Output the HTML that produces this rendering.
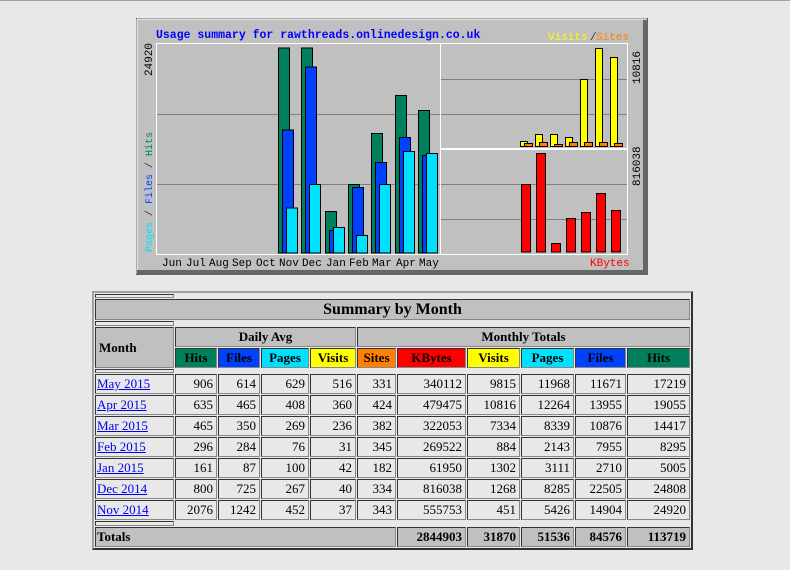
<!DOCTYPE html>
<html><head><meta charset="utf-8">
<style>
body{margin:0;width:790px;height:570px;background:#e8e8e8;position:relative;overflow:hidden;font-family:"Liberation Serif",serif;}
.top{position:absolute;left:0;top:0;width:790px;height:1px;background:#a0a0a0}
#chart{position:absolute;left:0;top:0}
table.s{position:absolute;left:92px;top:291px;width:599px;border:2px solid;border-color:#a0a0a0 #333 #333 #a0a0a0;border-spacing:1px;padding:0;table-layout:fixed;background:#e8e8e8}
table.s td,table.s th{border:1px solid;border-color:#333 #888 #888 #333;padding:0 3px;font-size:13px;height:18px;line-height:16px;white-space:nowrap}
table.s td{text-align:right}
table.s td.m{text-align:left;padding-left:1px}
table.s td.m a{color:#0000ee;text-decoration:underline}
table.s th{background:#c0c0c0;font-weight:bold}
tr.sep td{height:2px!important;padding:0!important;line-height:0;font-size:0}
tr.sep.b td{height:3px!important}
tr.sep td.e{border:none}
th.t{font-size:16px!important;height:19px!important}
.c1{background:#00805c!important}.c2{background:#0040ff!important}.c3{background:#00e0ff!important}.c4{background:#ffff00!important}.c5{background:#ff8000!important}.c6{background:#ff0000!important}
tr.tot td{background:#c0c0c0;font-weight:bold}
</style></head><body>
<div class="top"></div>
<svg id="chart" width="790" height="290" xmlns="http://www.w3.org/2000/svg">
<rect x="136.5" y="18.5" width="511" height="256" fill="#c0c0c0" stroke="#555"/>
<line x1="137" y1="19" x2="647" y2="19" stroke="#fff"/><line x1="137" y1="19" x2="137" y2="274" stroke="#fff"/>
<rect x="643" y="20" width="5" height="254" fill="#666"/><rect x="137" y="270" width="511" height="5" fill="#666"/>
<rect x="156.5" y="43.5" width="284" height="211" fill="none" stroke="#fff"/>
<rect x="440.5" y="43.5" width="187" height="105" fill="none" stroke="#fff"/>
<rect x="440.5" y="149.5" width="187" height="105" fill="none" stroke="#fff"/>
<g stroke="#808080"><line x1="157" y1="114.5" x2="440" y2="114.5"/><line x1="157" y1="184.5" x2="440" y2="184.5"/>
<line x1="441" y1="79.5" x2="627" y2="79.5"/><line x1="441" y1="114.5" x2="627" y2="114.5"/>
<line x1="441" y1="184.5" x2="627" y2="184.5"/><line x1="441" y1="219.5" x2="627" y2="219.5"/></g>
<g stroke="#000" stroke-width="1">
<rect x="278.5" y="48" width="11" height="205" fill="#00805c"/><rect x="282.5" y="130" width="11" height="123" fill="#0040ff"/><rect x="286.5" y="208" width="11" height="45" fill="#00e0ff"/>
<rect x="301.5" y="48" width="11" height="205" fill="#00805c"/><rect x="305.5" y="67" width="11" height="186" fill="#0040ff"/><rect x="309.5" y="184.5" width="11" height="68.5" fill="#00e0ff"/>
<rect x="325.5" y="211.5" width="11" height="41.5" fill="#00805c"/><rect x="329.5" y="230.5" width="11" height="22.5" fill="#0040ff"/><rect x="333.5" y="227.5" width="11" height="25.5" fill="#00e0ff"/>
<rect x="348.5" y="184.5" width="11" height="68.5" fill="#00805c"/><rect x="352.5" y="187.5" width="11" height="65.5" fill="#0040ff"/><rect x="356.5" y="235.5" width="11" height="17.5" fill="#00e0ff"/>
<rect x="371.5" y="133.5" width="11" height="119.5" fill="#00805c"/><rect x="375.5" y="162.5" width="11" height="90.5" fill="#0040ff"/><rect x="379.5" y="184.5" width="11" height="68.5" fill="#00e0ff"/>
<rect x="395.5" y="95.5" width="11" height="157.5" fill="#00805c"/><rect x="399.5" y="137.5" width="11" height="115.5" fill="#0040ff"/><rect x="403.5" y="151.5" width="11" height="101.5" fill="#00e0ff"/>
<rect x="418.5" y="110.5" width="11" height="142.5" fill="#00805c"/><rect x="422.5" y="155.5" width="11" height="97.5" fill="#0040ff"/><rect x="426.5" y="153.5" width="11" height="99.5" fill="#00e0ff"/>
<rect x="520.5" y="141.5" width="7" height="5" fill="#ff0"/><rect x="524.5" y="143.5" width="8" height="3" fill="#ff8000"/>
<rect x="535.5" y="134.5" width="7" height="12" fill="#ff0"/><rect x="539.5" y="142.5" width="8" height="4" fill="#ff8000"/>
<rect x="550.5" y="134.5" width="7" height="12" fill="#ff0"/><rect x="554.5" y="144.5" width="8" height="2" fill="#ff8000"/>
<rect x="565.5" y="137.5" width="7" height="9" fill="#ff0"/><rect x="569.5" y="142.5" width="8" height="4" fill="#ff8000"/>
<rect x="580.5" y="79.5" width="7" height="67" fill="#ff0"/><rect x="584.5" y="142.5" width="8" height="4" fill="#ff8000"/>
<rect x="595.5" y="48.5" width="7" height="98" fill="#ff0"/><rect x="599.5" y="142.5" width="8" height="4" fill="#ff8000"/>
<rect x="610.5" y="57.5" width="7" height="89" fill="#ff0"/><rect x="614.5" y="143.5" width="8" height="3" fill="#ff8000"/>
<rect x="521.5" y="184.5" width="9" height="67.5" fill="#f00"/>
<rect x="536.5" y="153.5" width="9" height="98.5" fill="#f00"/>
<rect x="551.5" y="243.5" width="9" height="8.5" fill="#f00"/>
<rect x="566.5" y="218.5" width="9" height="33.5" fill="#f00"/>
<rect x="581.5" y="212.5" width="9" height="39.5" fill="#f00"/>
<rect x="596.5" y="193.5" width="9" height="58.5" fill="#f00"/>
<rect x="611.5" y="210.5" width="9" height="41.5" fill="#f00"/>
</g>
<g font-family="Liberation Mono,monospace" font-size="11">
<text x="156" y="38" fill="#0000ff" font-weight="bold" font-size="11.5">Usage summary for rawthreads.onlinedesign.co.uk</text>
<text x="548" y="40" fill="#ffff00">Visits</text><text x="590" y="40" fill="#333">/</text><text x="596" y="40" fill="#ff8000">Sites</text>
<text x="590" y="266" fill="#ff0000">KBytes</text>
<text y="266" fill="#000" font-size="11"><tspan x="162">Jun</tspan><tspan x="186">Jul</tspan><tspan x="209">Aug</tspan><tspan x="232">Sep</tspan><tspan x="256">Oct</tspan><tspan x="279">Nov</tspan><tspan x="302">Dec</tspan><tspan x="326">Jan</tspan><tspan x="349">Feb</tspan><tspan x="372">Mar</tspan><tspan x="396">Apr</tspan><tspan x="419">May</tspan></text>
<text transform="translate(152,76) rotate(-90)" fill="#000">24920</text>
<text transform="translate(152,252) rotate(-90)" font-size="10"><tspan fill="#00e0ff">Pages</tspan><tspan fill="#333"> / </tspan><tspan fill="#0040ff">Files</tspan><tspan fill="#333"> / </tspan><tspan fill="#00805c">Hits</tspan></text>
<text transform="translate(640,84) rotate(-90)" fill="#000">10816</text>
<text transform="translate(640,186) rotate(-90)" fill="#000">816038</text>
</g>
</svg>
<table class="s">
<colgroup><col style="width:79px"><col style="width:42px"><col style="width:42px"><col style="width:48px"><col style="width:46px"><col style="width:39px"><col style="width:69px"><col style="width:53px"><col style="width:53px"><col style="width:51px"><col style="width:63px"></colgroup>
<tr class="sep"><td></td><td class="e" colspan="10"></td></tr>
<tr><th class="t" colspan="11">Summary by Month</th></tr>
<tr class="sep b"><td></td><td class="e" colspan="10"></td></tr>
<tr><th rowspan="2" style="text-align:left">Month</th><th colspan="4">Daily Avg</th><th colspan="6">Monthly Totals</th></tr>
<tr><th class="c1">Hits</th><th class="c2">Files</th><th class="c3">Pages</th><th class="c4">Visits</th><th class="c5">Sites</th><th class="c6">KBytes</th><th class="c4">Visits</th><th class="c3">Pages</th><th class="c2">Files</th><th class="c1">Hits</th></tr>
<tr class="sep"><td></td><td class="e" colspan="10"></td></tr>
<tr><td class="m"><a>May 2015</a></td><td>906</td><td>614</td><td>629</td><td>516</td><td>331</td><td>340112</td><td>9815</td><td>11968</td><td>11671</td><td>17219</td></tr>
<tr><td class="m"><a>Apr 2015</a></td><td>635</td><td>465</td><td>408</td><td>360</td><td>424</td><td>479475</td><td>10816</td><td>12264</td><td>13955</td><td>19055</td></tr>
<tr><td class="m"><a>Mar 2015</a></td><td>465</td><td>350</td><td>269</td><td>236</td><td>382</td><td>322053</td><td>7334</td><td>8339</td><td>10876</td><td>14417</td></tr>
<tr><td class="m"><a>Feb 2015</a></td><td>296</td><td>284</td><td>76</td><td>31</td><td>345</td><td>269522</td><td>884</td><td>2143</td><td>7955</td><td>8295</td></tr>
<tr><td class="m"><a>Jan 2015</a></td><td>161</td><td>87</td><td>100</td><td>42</td><td>182</td><td>61950</td><td>1302</td><td>3111</td><td>2710</td><td>5005</td></tr>
<tr><td class="m"><a>Dec 2014</a></td><td>800</td><td>725</td><td>267</td><td>40</td><td>334</td><td>816038</td><td>1268</td><td>8285</td><td>22505</td><td>24808</td></tr>
<tr><td class="m"><a>Nov 2014</a></td><td>2076</td><td>1242</td><td>452</td><td>37</td><td>343</td><td>555753</td><td>451</td><td>5426</td><td>14904</td><td>24920</td></tr>
<tr class="sep b"><td></td><td class="e" colspan="10"></td></tr>
<tr class="tot"><td class="m" colspan="6">Totals</td><td>2844903</td><td>31870</td><td>51536</td><td>84576</td><td>113719</td></tr>
</table>
</body></html>
